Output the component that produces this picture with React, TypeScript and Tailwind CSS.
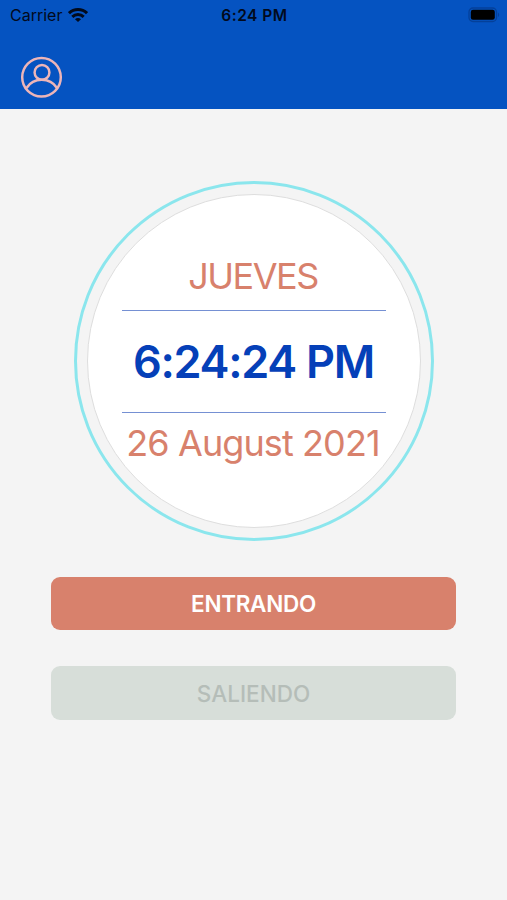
const clock = {
  day: 'JUEVES',
  time: '6:24:24 PM',
  date: '26 August 2021',
};

function WifiIcon() {
  return (
    <svg width="20" height="14" viewBox="0 0 20 14" fill="none" stroke="#020a1c" strokeWidth="3">
      <path d="M1 5.2C6 .4 14 .4 19 5.2" />
      <path d="M4.3 8.8c3.2-3 8.2-3 11.4 0" />
      <path d="M10 14 7 11.2c1.6-1.5 4.400-1.500 6 0Z" fill="#020a1c" stroke="none" />
    </svg>
  );
}

function BatteryIcon() {
  return (
    <svg width="32" height="16" viewBox="0 0 32 16" fill="none">
      <rect x="1" y="1" width="27.5" height="13.5" rx="4" stroke="#04409a" strokeWidth="1.3" />
      <rect x="2.8" y="2.8" width="24" height="10" rx="2.2" fill="#000" />
      <path d="M30 5.5c1.6.7 1.6 3.8 0 4.5Z" fill="#04409a" />
    </svg>
  );
}

function ProfileIcon() {
  return (
    <svg width="43" height="42" viewBox="0 0 43 42" fill="none" stroke="#edb5b8" strokeWidth="2.5">
      <circle cx="21.5" cy="21.2" r="19.3" />
      <circle cx="22" cy="16.4" r="7.4" />
      <path d="M6.5 32C10 26.6 15.5 23.8 21.7 23.8S33.5 26.6 37 32" />
    </svg>
  );
}

function StatusBar() {
  return (
    <div className="grid h-[30px] grid-cols-3 items-center pl-[10px] pr-[7px] text-[#020a1c]">
      <div className="flex items-center gap-[6px]">
        <span className="text-[16px]">Carrier</span>
        <WifiIcon />
      </div>
      <span className="pr-px pt-px text-center text-[15.5px] font-semibold tracking-[0.5px]">6:24 PM</span>
      <div className="flex justify-end">
        <BatteryIcon />
      </div>
    </div>
  );
}

function ClockFace() {
  return (
    <div className="flex size-[360px] items-center justify-center rounded-full border-[3px] border-[#8be6ed]">
      <div className="flex size-[334px] flex-col items-center rounded-full border border-[#dedede] bg-white pt-[55px]">
        <span className="flex h-[52px] items-center whitespace-nowrap pr-px text-[36px] tracking-[-1.5px] text-[#d8816c]">
          {clock.day}
        </span>
        <div className="mt-2 h-[103px] w-[264px] border-y border-[#7590d3]">
          <span className="flex h-full items-center justify-center whitespace-nowrap pt-px text-[45px] font-semibold tracking-[-1.3px] text-[#0540b8]">
            {clock.time}
          </span>
        </div>
        <span className="flex h-[60px] items-center whitespace-nowrap pr-px text-[36px] tracking-[-0.9px] text-[#d8816c]">
          {clock.date}
        </span>
      </div>
    </div>
  );
}

export default function App() {
  return (
    <div className="flex min-h-[900px] w-full flex-col bg-[#f4f4f4] font-['Inter',sans-serif]">
      <header className="h-[108.5px] bg-[#0553c1]">
        <StatusBar />
        <div className="pl-5 pt-[26px]">
          <ProfileIcon />
        </div>
      </header>
      <main className="flex flex-col items-center pt-[72px]">
        <ClockFace />
        <button className="mt-9 h-[53.5px] w-[405px] rounded-[9px] bg-[#d8816c] pt-px text-[22.5px] font-semibold tracking-[-0.3px] text-white">
          ENTRANDO
        </button>
        <button disabled className="mt-9 h-[53.5px] w-[405px] rounded-[9px] bg-[#d7ded9] pt-[3px] text-[22.5px] font-medium text-[#b5bdb8]">
          SALIENDO
        </button>
      </main>
    </div>
  );
}
